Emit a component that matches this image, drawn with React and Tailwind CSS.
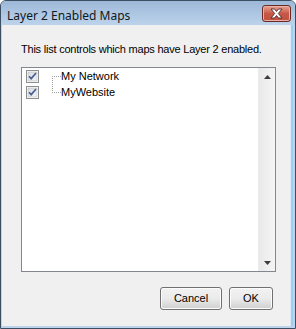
import React from 'react';

const titleFont = { fontFamily: '"Noto Sans", "Open Sans", sans-serif' };
const dlgFont = { fontFamily: '"Liberation Sans", Arial, sans-serif' };

const CheckBox = () => (
  <svg width="13" height="13" viewBox="0 0 13 13" className="shrink-0">
    <defs>
      <linearGradient id="cbg" x1="0" y1="0" x2="1" y2="1">
        <stop offset="0" stopColor="#d8dbe0" />
        <stop offset="1" stopColor="#f6f6f6" />
      </linearGradient>
    </defs>
    <rect x="0.5" y="0.5" width="12" height="12" fill="#ffffff" stroke="#8e8f8f" />
    <rect x="2" y="2" width="9" height="9" fill="url(#cbg)" stroke="#b9bcc2" strokeWidth="0.6" />
    <path d="M3 6.2 L5.2 8.6 L10 3" fill="none" stroke="#4b5f97" strokeWidth="1.7" />
  </svg>
);

// dotted tree connector, first = line goes down from centre, last = line comes from top
const Connector = ({ first }) => {
  const dots = [];
  for (let x = 0; x < 9; x += 2) dots.push(<rect key={'h' + x} x={x} y={8} width="1" height="1" fill="#a0a0a0" />);
  if (first) {
    for (let y = 10; y < 16; y += 2) dots.push(<rect key={'v' + y} x={0} y={y} width="1" height="1" fill="#a0a0a0" />);
  } else {
    for (let y = 0; y < 8; y += 2) dots.push(<rect key={'v' + y} x={0} y={y} width="1" height="1" fill="#a0a0a0" />);
  }
  return (
    <svg width="9" height="16" className="shrink-0">
      {dots}
    </svg>
  );
};

const Arrow = ({ up }) => (
  <svg width="7" height="4" viewBox="0 0 7 4">
    <path d={up ? 'M0 4 L3.5 0 L7 4 Z' : 'M0 0 L3.5 4 L7 0 Z'} fill="#3c3c3c" />
  </svg>
);

const TreeRow = ({ label, first }) => (
  <div className="flex items-center h-[16px]">
    <CheckBox />
    <div className="w-[13px]" />
    <Connector first={first} />
    <span className="text-[11px] leading-[16px] text-black whitespace-nowrap">{label}</span>
  </div>
);

const Button = ({ children, className }) => (
  <button
    className={`h-[23px] rounded-[3px] border border-[#707070] bg-gradient-to-b from-[#f2f2f2] via-[#ebebeb] to-[#cfcfcf] shadow-[inset_0_0_0_1px_#fcfcfc] text-[11px] text-black ${className}`}
    style={dlgFont}
  >
    {children}
  </button>
);

export default function App() {
  return (
    <div
      className="w-[296px] h-[329px] flex flex-col bg-[#bcd3eb] border border-[#3c4e62] rounded-t-[6px] overflow-hidden"
      style={dlgFont}
    >
      {/* title bar */}
      <div className="h-[24px] shrink-0 flex items-start justify-between pl-[6px] pr-[4px] bg-gradient-to-b from-[#9db8d8] to-[#bcd3eb]">
        <span className="text-[12px] leading-[14px] mt-[8px] text-[#101820]" style={titleFont}>
          Layer 2 Enabled Maps
        </span>
        <div className="mt-[4px] w-[29px] h-[17px] rounded-[3px] border border-[#6b2a25] bg-gradient-to-b from-[#e8a495] via-[#c75848] to-[#c0503f] shadow-[inset_0_0_0_1px_#e9b0a6] flex items-center justify-center">
          <svg width="13" height="11" viewBox="0 0 13 11">
            <path
              d="M1 1 H4.5 L6.5 3.5 L8.5 1 H12 L8.3 5.5 L12 10 H8.5 L6.5 7.5 L4.5 10 H1 L4.7 5.5 Z"
              fill="#ffffff"
              stroke="#4a2a2a"
              strokeWidth="0.9"
              strokeLinejoin="round"
            />
          </svg>
        </div>
      </div>

      {/* client area */}
      <div className="flex-1 flex flex-col bg-[#f0f0f0] ml-[1px] mr-[5px] mb-[2px] pl-[19px] pt-[17px] shadow-[1px_0_0_#dde9f5,3px_0_0_#9fcff0]">
        <p className="text-[11px] leading-[15px] tracking-[-0.22px] text-black whitespace-nowrap">
          This list controls which maps have Layer 2 enabled.
        </p>

        <div className="mt-[10px] w-[255px] h-[205px] border border-[#828790] bg-white flex">
          <div className="flex-1 flex flex-col pl-[4px]">
            <TreeRow label="My Network" first />
            <TreeRow label="MyWebsite" />
          </div>
          <div className="w-[17px] flex flex-col bg-gradient-to-r from-[#e9e9e9] to-[#f5f5f5] border-l border-[#ececec]">
            <div className="h-[17px] flex items-center justify-center">
              <Arrow up />
            </div>
            <div className="flex-1" />
            <div className="h-[17px] flex items-center justify-center">
              <Arrow />
            </div>
          </div>
        </div>

        <div className="mt-[15px] w-[252px] flex justify-end gap-[7px]">
          <Button className="w-[62px]">Cancel</Button>
          <Button className="w-[44px]">OK</Button>
        </div>
      </div>
    </div>
  );
}
